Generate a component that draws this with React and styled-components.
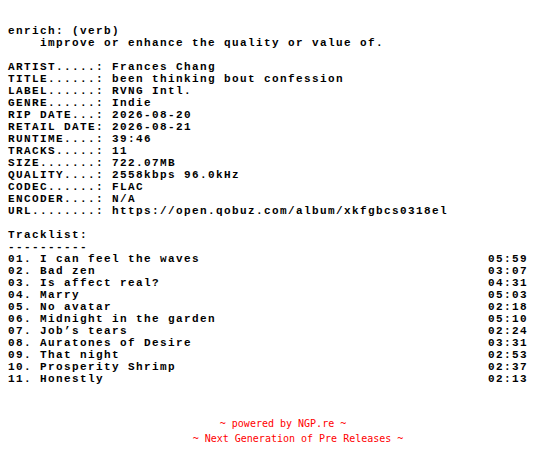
import React from "react";
import styled, { createGlobalStyle } from "styled-components";

const Global = createGlobalStyle`
  html, body { margin: 0; padding: 0; background: #ffffff; }
  body { padding: 8px; }
`;

const Page = styled.div`
  width: 520px;
  display: flex;
  flex-direction: column;
`;

const Nfo = styled.div`
  padding-top: 17px;
  font-family: "Liberation Mono", "DejaVu Sans Mono", monospace;
  font-weight: bold;
  font-size: 11px;
  letter-spacing: 1.4px;
  line-height: 12px;
  color: #000000;
  display: flex;
  flex-direction: column;
`;

const Line = styled.div`
  white-space: pre;
  height: 12px;
`;

const Track = styled.div`
  display: flex;
  justify-content: space-between;
  white-space: pre;
  height: 12px;
`;

const Footer = styled.div`
  margin-top: 31px;
  padding-left: 60px;
  display: flex;
  flex-direction: column;
  align-items: center;
  font-family: "DejaVu Sans Mono", monospace;
  font-size: 10px;
  line-height: 15px;
  color: #ff0000;
`;

const FooterLine = styled.div`
  white-space: pre;
  padding-right: ${(p) => p.$shift || 0}px;
`;

const info = [
  ["ARTIST.....", "Frances Chang"],
  ["TITLE......", "been thinking bout confession"],
  ["LABEL......", "RVNG Intl."],
  ["GENRE......", "Indie"],
  ["RIP DATE...", "2026-08-20"],
  ["RETAIL DATE", "2026-08-21"],
  ["RUNTIME....", "39:46"],
  ["TRACKS.....", "11"],
  ["SIZE.......", "722.07MB"],
  ["QUALITY....", "2558kbps 96.0kHz"],
  ["CODEC......", "FLAC"],
  ["ENCODER....", "N/A"],
  ["URL........", "https://open.qobuz.com/album/xkfgbcs0318el"],
];

const tracks = [
  ["01", "I can feel the waves", "05:59"],
  ["02", "Bad zen", "03:07"],
  ["03", "Is affect real?", "04:31"],
  ["04", "Marry", "05:03"],
  ["05", "No avatar", "02:18"],
  ["06", "Midnight in the garden", "05:10"],
  ["07", "Job\u2019s tears", "02:24"],
  ["08", "Auratones of Desire", "03:31"],
  ["09", "That night", "02:53"],
  ["10", "Prosperity Shrimp", "02:37"],
  ["11", "Honestly", "02:13"],
];

export default function App() {
  return (
    <>
      <Global />
      <Page>
        <Nfo>
          <Line>enrich: (verb)</Line>
          <Line>{"    improve or enhance the quality or value of."}</Line>
          <Line> </Line>
          {info.map(([k, v]) => (
            <Line key={k}>{`${k}: ${v}`}</Line>
          ))}
          <Line> </Line>
          <Line>Tracklist:</Line>
          <Line>----------</Line>
          {tracks.map(([n, t, d]) => (
            <Track key={n}>
              <span>{`${n}. ${t}`}</span>
              <span>{d}</span>
            </Track>
          ))}
        </Nfo>
        <Footer>
          <FooterLine $shift={30}>~ powered by NGP.re ~</FooterLine>
          <FooterLine>~ Next Generation of Pre Releases ~</FooterLine>
        </Footer>
      </Page>
    </>
  );
}
